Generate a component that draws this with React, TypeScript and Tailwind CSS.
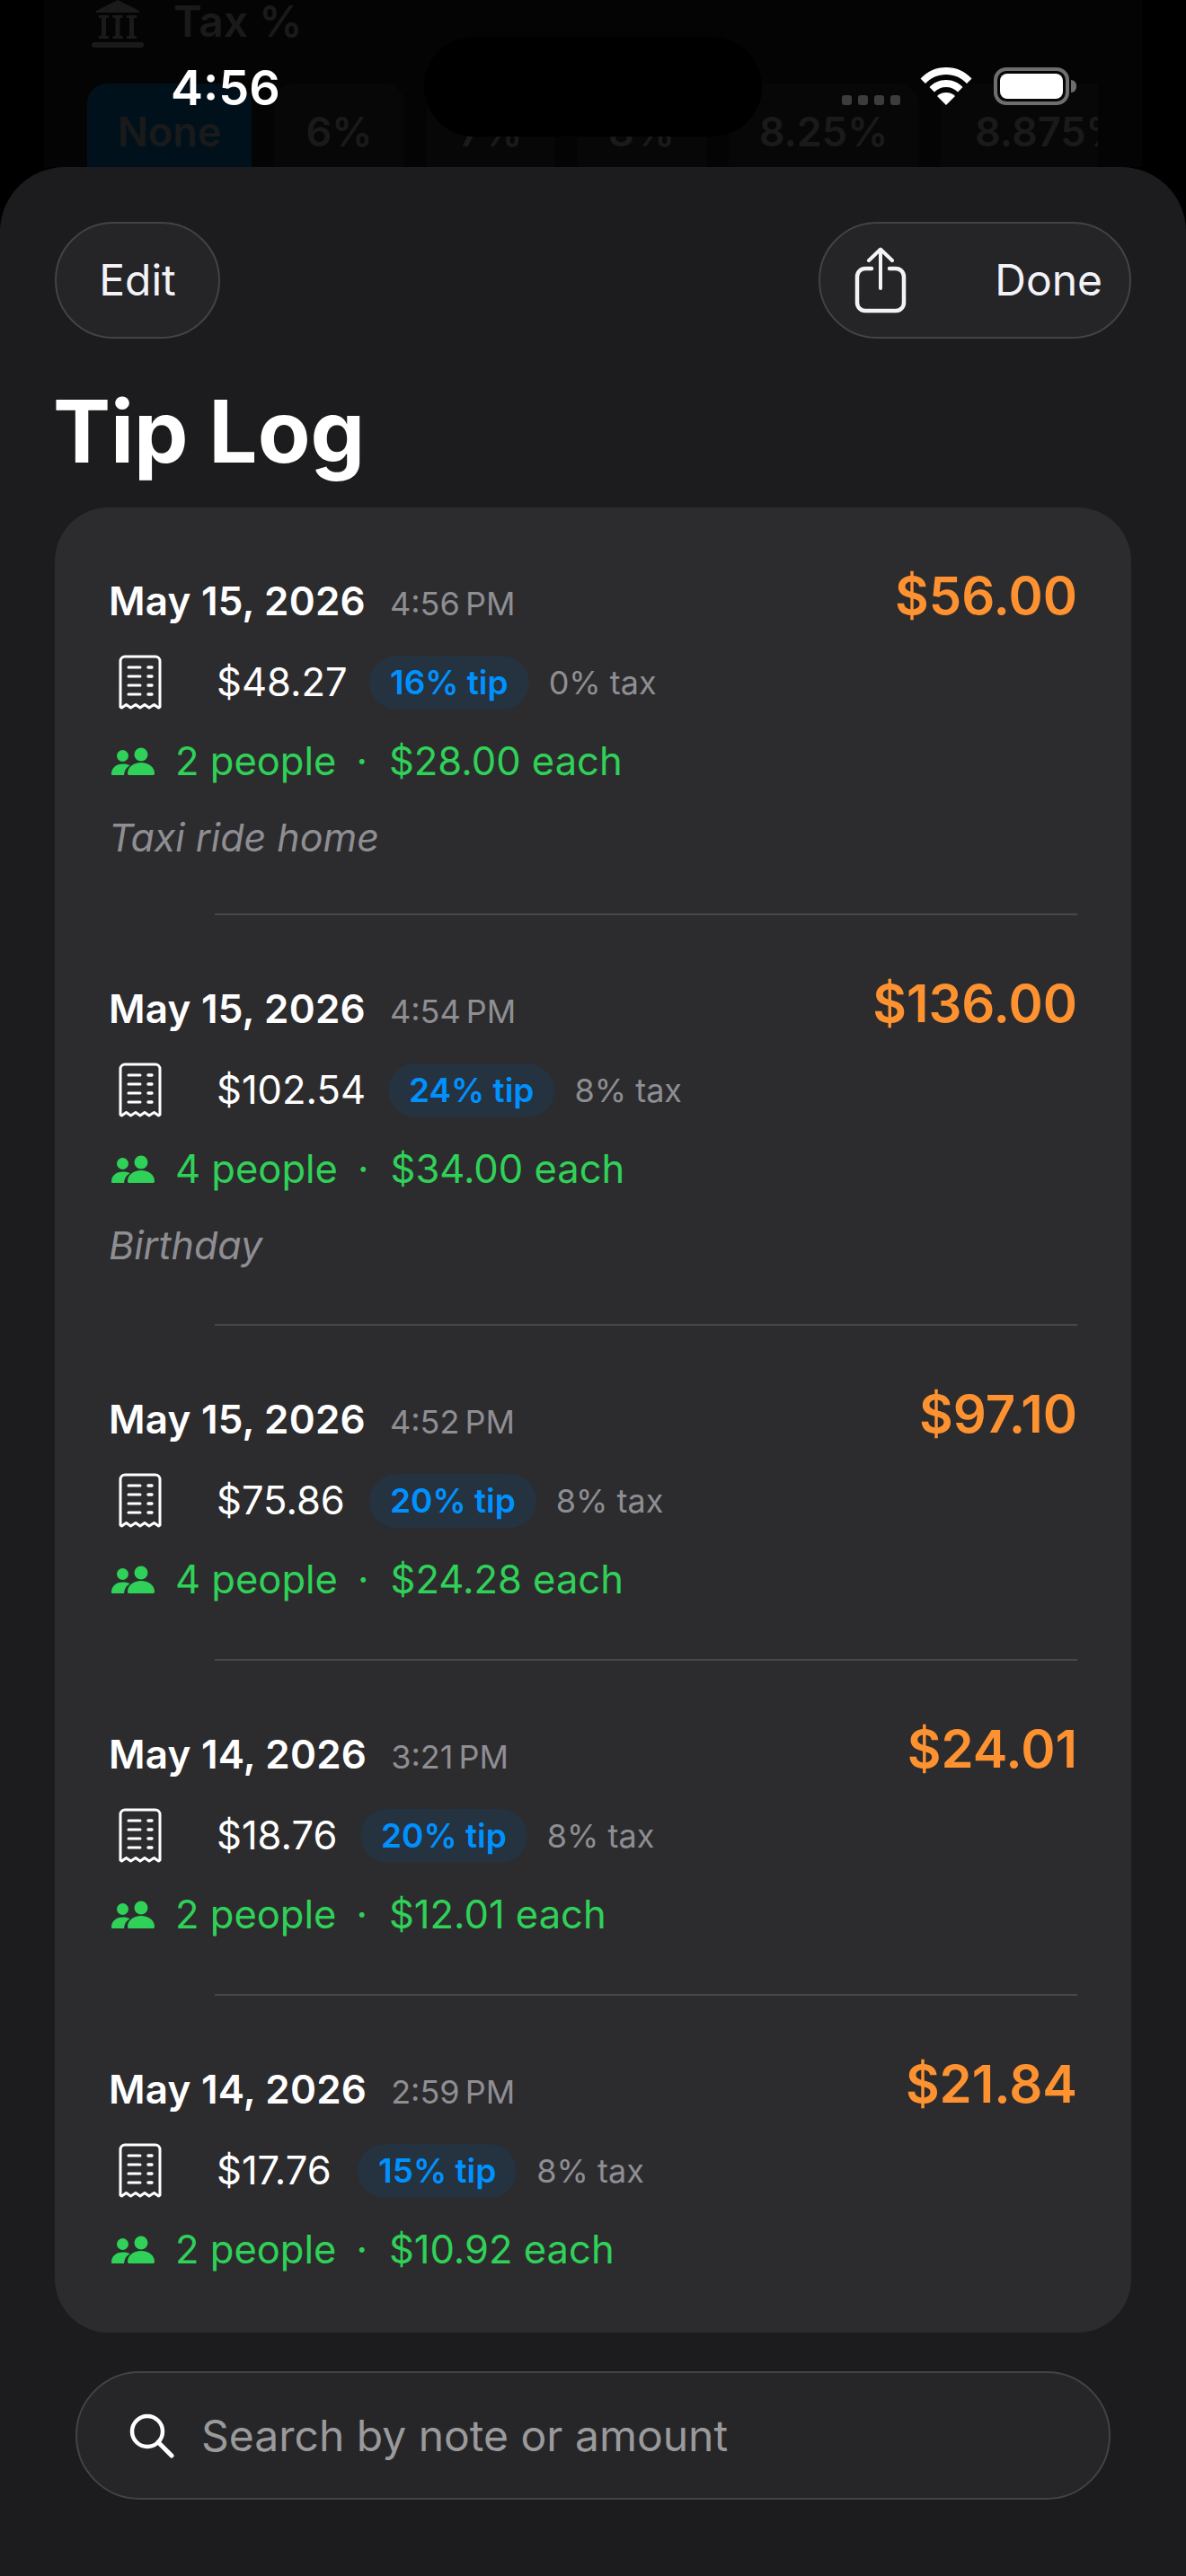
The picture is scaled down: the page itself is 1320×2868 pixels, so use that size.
import React from "react";

const font = { fontFamily: "Inter, 'Liberation Sans', sans-serif" };

function ReceiptIcon() {
  return (
    <svg width="48" height="62" viewBox="0 0 48 62" fill="none" className="shrink-0">
      <path d="M2 58V7a5 5 0 0 1 5-5h34a5 5 0 0 1 5 5v51l-1.5 1-5-3.5-5.5 3.5-5-3.5-5 3.5-5-3.500-5.500 3.500-5-3.500-5 3.500z" stroke="#fff" strokeWidth="3" strokeLinejoin="round" />
      <path d="M11 14h13M11 24h13M11 34h13M11 44h13" stroke="#fff" strokeWidth="3" strokeLinecap="round" />
      <path d="M33 14h4M33 24h4M33 34h4M33 44h4" stroke="#fff" strokeWidth="3.4" strokeLinecap="round" />
    </svg>
  );
}

function PeopleIcon() {
  return (
    <svg width="48" height="32" viewBox="0 0 48 32" fill="#30d158" className="shrink-0">
      <circle cx="12.5" cy="9.5" r="6.5" />
      <circle cx="33" cy="8" r="7.5" />
      <path d="M0 30c0-7 5-11.500 13-11.500 3 0 5.500.6 7.500 1.800C16.500 22.500 14.500 26 14 31H1.500C.5 31 0 30.800 0 30z" />
      <path d="M18 29c0-7 6.500-12 15-12s15 5 15 12c0 1.500-.8 2-2 2H20c-1.200 0-2-.5-2-2z" />
    </svg>
  );
}

function ShareIcon() {
  return (
    <svg width="58" height="74" viewBox="0 0 58 74" fill="none" className="shrink-0">
      <path d="M19 24H12a9 9 0 0 0-9 9v29a9 9 0 0 0 9 9h34a9 9 0 0 0 9-9V33a9 9 0 0 0-9-9h-7" stroke="#f2f2f7" strokeWidth="4.500" strokeLinecap="round" />
      <path d="M29 46V3M16 15 29 2.500 42 15" stroke="#f2f2f7" strokeWidth="4" strokeLinecap="round" strokeLinejoin="round" />
    </svg>
  );
}

function WifiIcon() {
  return (
    <svg width="58" height="42" viewBox="0 0 58 42" fill="#fff">
      <path d="M29 0C17.500 0 8 4.500.5 12.500L6 18c6-6.500 14-10 23-10s17 3.500 23 10l5.500-5.500C50 4.500 40.500 0 29 0z" />
      <path d="M29 14c-7.500 0-14 3-18.500 8l5.500 5.500c3.300-3.500 7.800-5.500 13-5.500s9.700 2 13 5.500l5.500-5.500C43 17 36.500 14 29 14z" />
      <path d="M29 28c-4 0-7.500 1.600-10 4l10 10 10-10c-2.500-2.400-6-4-10-4z" />
    </svg>
  );
}

type Row = {
  date: string; time: string; total: string; bill: string; tip: string; tax: string;
  people: string; each: string; note?: string; h: string; billW: string;
};

const rows: Row[] = [
  { date: "May 15, 2026", time: "4:56 PM", total: "$56.00", bill: "$48.27", tip: "16% tip", tax: "0% tax", people: "2 people", each: "$28.00 each", note: "Taxi ride home", h: "h-[454px]", billW: "w-[170px]" },
  { date: "May 15, 2026", time: "4:54 PM", total: "$136.00", bill: "$102.54", tip: "24% tip", tax: "8% tax", people: "4 people", each: "$34.00 each", note: "Birthday", h: "h-[457px]", billW: "w-[191px]" },
  { date: "May 15, 2026", time: "4:52 PM", total: "$97.10", bill: "$75.86", tip: "20% tip", tax: "8% tax", people: "4 people", each: "$24.28 each", h: "h-[373px]", billW: "w-[170px]" },
  { date: "May 14, 2026", time: "3:21 PM", total: "$24.01", bill: "$18.76", tip: "20% tip", tax: "8% tax", people: "2 people", each: "$12.01 each", h: "h-[373px]", billW: "w-[160px]" },
  { date: "May 14, 2026", time: "2:59 PM", total: "$21.84", bill: "$17.76", tip: "15% tip", tax: "8% tax", people: "2 people", each: "$10.92 each", h: "h-[375px]", billW: "w-[157px]" },
];

function LogRow({ r, last }: { r: Row; last: boolean }) {
  return (
    <div className={`relative ${r.h} pl-[60px] pr-[60px] pt-[74px]`}>
      <div className="flex items-start justify-between">
        <div className="flex items-baseline gap-[27px] leading-[60px]">
          <span className="text-[44px] font-semibold tracking-[0.2px] text-white">{r.date}</span>
          <span className="text-[36px] text-[#8e8e93] [word-spacing:-4px]">{r.time}</span>
        </div>
        <span className="-mt-[11px] text-[58px] font-semibold leading-[70px] text-[#ff9230]">{r.total}</span>
      </div>
      <div className="mt-[27px] flex h-[62px] items-center">
        <div className="ml-[11px] w-[109px]"><ReceiptIcon /></div>
        <span className={`${r.billW} text-[43.5px] text-white`}>{r.bill}</span>
        <span className="flex h-[60px] items-center rounded-full bg-[#25323f] px-[23px] text-[37px] font-semibold text-[#0091ff]">{r.tip}</span>
        <span className="ml-[22px] text-[36px] text-[#8e8e93]">{r.tax}</span>
      </div>
      <div className="mt-[27px] flex h-[60px] items-center text-[43.5px] text-[#30d158]">
        <div className="ml-[3px]"><PeopleIcon /></div>
        <span className="ml-[23px]">{r.people}</span>
        <span className="ml-[22px] mr-[24px]">·</span>
        <span>{r.each}</span>
      </div>
      {r.note && <div className="mt-[24px] text-[43px] italic leading-[60px] text-[#8e8e93]">{r.note}</div>}
      {!last && <div className="absolute bottom-0 left-[178px] right-[60px] h-[2px] bg-[#48484a]" />}
    </div>
  );
}

export default function App() {
  return (
    <div className="relative h-[2868px] w-[1320px] overflow-hidden bg-black" style={font}>
      {/* dimmed page behind the sheet */}
      <div className="mx-[49px] h-[186px] overflow-hidden bg-[#040404] px-[48px]">
        <div className="flex h-[93px] items-start gap-[33px]">
          <svg width="58" height="54" viewBox="0 0 58 54" fill="#1a1a1a" className="ml-[5px] shrink-0">
            <path d="M29 0 53 12v2H5v-2z" />
            <path d="M8 17h11v3h-3v20h3v3H8v-3h3V20H8zM23.500 17h11v3h-3v20h3v3h-11v-3h3V20h-3zM39 17h11v3h-3v20h3v3H39v-3h3V20h-3z" />
            <rect x="0" y="47" width="58" height="6" rx="3" />
          </svg>
          <span className="mt-[4px] text-[48px] font-semibold leading-[40px] text-[#1a1a1a]">Tax %</span>
        </div>
        <div className="flex gap-[25px] text-[45px] font-semibold text-[#1a1a1a]">
          <div className="flex h-[120px] w-[183px] justify-center rounded-[22px] bg-[#01111c] pt-[24px] leading-[60px]">None</div>
          <div className="flex h-[120px] w-[145px] justify-center rounded-[22px] bg-[#070707] pt-[24px] leading-[60px]">6%</div>
          <div className="flex h-[120px] w-[142px] justify-center rounded-[22px] bg-[#070707] pt-[24px] leading-[60px]">7%</div>
          <div className="flex h-[120px] w-[144px] justify-center rounded-[22px] bg-[#070707] pt-[24px] leading-[60px]">8%</div>
          <div className="flex h-[120px] w-[211px] justify-center rounded-[22px] bg-[#070707] pt-[24px] leading-[60px]">8.25%</div>
          <div className="h-[120px] w-[175px] shrink-0 overflow-hidden whitespace-nowrap rounded-l-[22px] bg-[#070707] pl-[38px] pt-[24px] leading-[60px]">8.875%</div>
        </div>
      </div>

      {/* status bar */}
      <div className="absolute left-0 top-0 h-[186px] w-full">
        <span className="absolute left-[190px] top-[71px] text-[54px] font-semibold leading-[54px] text-white">4:56</span>
        <div className="absolute left-[472px] top-[41px] h-[111px] w-[376px] rounded-[56px] bg-black" />
        <div className="absolute left-[937px] top-[106px] flex gap-[7px]">
          <i className="h-[11px] w-[11px] rounded-[3px] bg-[#3c3c3c]" />
          <i className="h-[11px] w-[11px] rounded-[3px] bg-[#3c3c3c]" />
          <i className="h-[11px] w-[11px] rounded-[3px] bg-[#3c3c3c]" />
          <i className="h-[11px] w-[11px] rounded-[3px] bg-[#3c3c3c]" />
        </div>
        <div className="absolute left-[1024px] top-[75px]"><WifiIcon /></div>
        <div className="absolute left-[1106px] top-[75px] h-[42px] w-[84px] rounded-[14px] border-[4px] border-[#6e6e6e] p-[3px]">
          <div className="h-full w-full rounded-[8px] bg-white" />
        </div>
        <div className="absolute left-[1192px] top-[89px] h-[14px] w-[6px] rounded-r-full bg-[#6e6e6e]" />
      </div>

      {/* sheet */}
      <div className="relative h-[2682px] rounded-t-[72px] bg-[#1c1c1e] px-[61px] pt-[61px]">
        <div className="flex items-center justify-between">
          <div className="flex h-[130px] w-[184px] items-center justify-center rounded-full border-2 border-[#434345] bg-[#252527] text-[48px] text-[#f2f2f7]">Edit</div>
          <div className="flex h-[130px] w-[348px] items-center justify-between rounded-full border-2 border-[#434345] bg-[#252527] pl-[38px] pr-[30px] text-[48px] text-[#f2f2f7]">
            <ShareIcon />
            <span>Done</span>
          </div>
        </div>
        <h1 className="-ml-[2px] mt-[47px] text-[96px] font-bold leading-[112px] text-white">Tip Log</h1>
        <div className="mt-[29px] h-[2032px] overflow-hidden rounded-[60px] bg-[#2c2c2e]">
          {rows.map((r, i) => <LogRow key={i} r={r} last={i === rows.length - 1} />)}
        </div>
        <div className="ml-[23px] mt-[43px] flex h-[143px] w-[1152px] items-center rounded-full border-2 border-[#434345] bg-[#262628] pl-[58px]">
          <svg width="50" height="50" viewBox="0 0 50 50" fill="none" className="shrink-0">
            <circle cx="20" cy="20" r="17" stroke="#fff" strokeWidth="4.500" />
            <path d="m32 32 15 15" stroke="#fff" strokeWidth="5" strokeLinecap="round" />
          </svg>
          <span className="ml-[30px] text-[48px] text-[#9a9a9c]">Search by note or amount</span>
        </div>
      </div>
    </div>
  );
}
